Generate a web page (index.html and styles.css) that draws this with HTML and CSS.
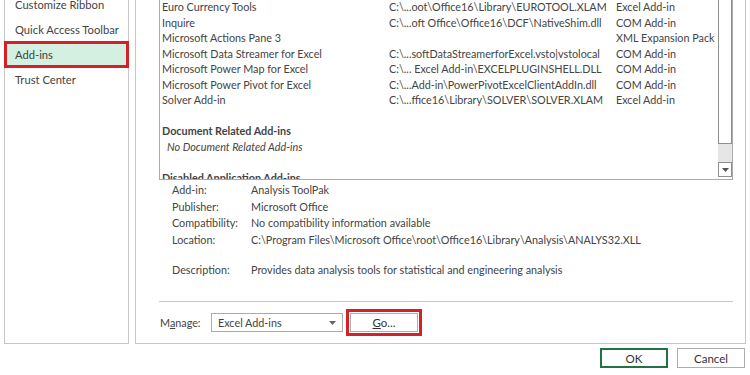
FILE: index.html
```html
<!DOCTYPE html>
<html>
<head>
    <title>Excel Options - Add-ins</title>
    <link rel="stylesheet" href="styles.css">
</head>
<body>
    <div class="dialog">
        <div class="columns">
            <!-- left category list -->
            <div class="nav">
                <ul class="nav-list">
                    <li>Customize Ribbon</li>
                    <li>Quick Access Toolbar</li>
                    <li class="selected">Add-ins</li>
                    <li>Trust Center</li>
                </ul>
            </div>

            <!-- add-ins page -->
            <div class="main">
                <div class="listbox">
                    <div class="list">
                        <div class="row"><span>Euro Currency Tools</span><span>C:\...oot\Office16\Library\EUROTOOL.XLAM</span><span>Excel Add-in</span></div>
                        <div class="row"><span>Inquire</span><span>C:\...oft Office\Office16\DCF\NativeShim.dll</span><span>COM Add-in</span></div>
                        <div class="row"><span>Microsoft Actions Pane 3</span><span></span><span>XML Expansion Pack</span></div>
                        <div class="row"><span>Microsoft Data Streamer for Excel</span><span>C:\...softDataStreamerforExcel.vsto|vstolocal</span><span>COM Add-in</span></div>
                        <div class="row"><span>Microsoft Power Map for Excel</span><span>C:\... Excel Add-in\EXCELPLUGINSHELL.DLL</span><span>COM Add-in</span></div>
                        <div class="row"><span>Microsoft Power Pivot for Excel</span><span>C:\...Add-in\PowerPivotExcelClientAddIn.dll</span><span>COM Add-in</span></div>
                        <div class="row"><span>Solver Add-in</span><span>C:\...ffice16\Library\SOLVER\SOLVER.XLAM</span><span>Excel Add-in</span></div>
                        <div class="row blank"></div>
                        <div class="group">Document Related Add-ins</div>
                        <div class="none">No Document Related Add-ins</div>
                        <div class="row blank"></div>
                        <div class="group">Disabled Application Add-ins</div>
                    </div>
                    <div class="scrollbar">
                        <div class="thumb"></div>
                        <div class="track"></div>
                        <div class="arrow">
                            <svg width="7" height="4" viewBox="0 0 7 4"><path d="M0 0H7L3.5 4Z" fill="#555"/></svg>
                        </div>
                    </div>
                </div>

                <div class="details">
                    <div class="detail"><span class="label">Add-in:</span><span>Analysis ToolPak</span></div>
                    <div class="detail"><span class="label">Publisher:</span><span>Microsoft Office</span></div>
                    <div class="detail"><span class="label">Compatibility:</span><span>No compatibility information available</span></div>
                    <div class="detail"><span class="label">Location:</span><span>C:\Program Files\Microsoft Office\root\Office16\Library\Analysis\ANALYS32.XLL</span></div>
                    <div class="detail description"><span class="label">Description:</span><span>Provides data analysis tools for statistical and engineering analysis</span></div>
                </div>

                <div class="manage">
                    <span class="manage-label">M<u>a</u>nage:</span>
                    <div class="select">
                        <span>Excel Add-ins</span>
                        <svg width="7" height="4" viewBox="0 0 7 4"><path d="M0 0H7L3.5 4Z" fill="#666"/></svg>
                    </div>
                    <div class="highlight">
                        <button class="btn go"><u>G</u>o...</button>
                    </div>
                </div>
            </div>
        </div>

        <div class="footer">
            <button class="btn ok">OK</button>
            <button class="btn">Cancel</button>
        </div>
    </div>
</body>
</html>
```

FILE: styles.css
```css
/* Excel Options dialog, Add-ins page */
body {
    margin: 0;
    width: 750px;
    height: 375px;
    overflow: hidden;
    background: white;
    font-family: Lato, "Segoe UI", sans-serif;
    font-size: 10.8px;
    color: #444;
}

.columns {
    display: flex;
    gap: 6px;
    padding-left: 4px;
    height: 344px;
}

/* left category list */
.nav {
    flex: none;
    width: 123px;
    border: 1px solid #c6c6c6;
    border-top: none;
}

.nav-list {
    list-style: none;
    margin: -8px 0 0 0;
    padding: 0;
}

.nav-list li {
    height: 25px;
    line-height: 25px;
    padding-left: 10px;
    font-size: 11.2px;
    white-space: nowrap;
}

.nav-list li.selected {
    background: #d3f0e0;
    outline: 3px solid #d32029;
    outline-offset: -2px;
}

/* main page */
.main {
    flex: 1;
    margin-right: 4px;
    border: 1px solid #c6c6c6;
    border-top: none;
    display: flex;
    flex-direction: column;
    min-width: 0;
}

.listbox {
    margin: 0 12px 0 23px;
    height: 179px;
    border: 1px solid #ababab;
    border-top: none;
    display: flex;
    overflow: hidden;
}

.list {
    flex: 1;
    padding-left: 2px;
    margin-top: -1px;
    min-width: 0;
}

.row {
    display: grid;
    grid-template-columns: 227px 227px 1fr;
    height: 15.5px;
    line-height: 15.5px;
    white-space: nowrap;
}

.group {
    height: 15.5px;
    line-height: 15.5px;
    font-weight: bold;
    white-space: nowrap;
}

.none {
    height: 15.5px;
    line-height: 15.5px;
    font-style: italic;
    padding-left: 5px;
}

.scrollbar {
    flex: none;
    width: 14px;
    display: flex;
    flex-direction: column;
}

.thumb {
    height: 144px;
    border: 1px solid #8e8e8e;
    border-top: none;
    box-sizing: border-box;
    background: white;
}

.track {
    height: 18px;
    background: #e6e6e6;
}

.arrow {
    height: 15px;
    border: 1px solid #8e8e8e;
    box-sizing: border-box;
    display: flex;
    align-items: center;
    justify-content: center;
}

/* selected add-in details */
.details {
    padding: 2px 0 0 36px;
}

.detail {
    display: flex;
    height: 16.5px;
    line-height: 16.5px;
    white-space: nowrap;
}

.detail .label {
    flex: none;
    width: 79px;
}

.detail.description {
    margin-top: 13.5px;
}

/* manage row */
.manage {
    margin: auto 12px 0 23px;
    border-top: 1px solid #c6c6c6;
    height: 41px;
    display: flex;
    align-items: center;
}

.manage-label {
    margin-left: 1px;
    width: 51px;
}

.select {
    width: 118px;
    height: 17px;
    border: 1px solid #ababab;
    display: flex;
    align-items: center;
    justify-content: space-between;
    padding: 0 6px;
}

.highlight {
    margin-left: 3px;
    border: 3px solid #d32029;
    padding: 1px;
    display: flex;
}

.btn {
    font-family: inherit;
    font-size: 11.5px;
    color: #333;
    background: white;
    border: 1px solid #adadad;
    width: 68px;
    height: 20px;
    padding: 0;
}

.go {
    height: 19px;
}

.footer {
    display: flex;
    justify-content: flex-end;
    gap: 9px;
    padding: 4px 5px 0 0;
}

.ok {
    border: 2px solid #217346;
}
```
